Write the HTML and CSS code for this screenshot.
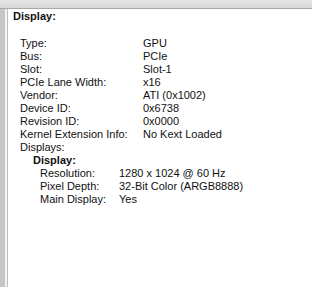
FILE: index.html
```html
<!DOCTYPE html>
<html lang="en">
<head>
  <meta charset="UTF-8" />
  <title>Display</title>
  <link rel="stylesheet" href="styles.css">
</head>
<body>
  <div class="topbar"></div>
  <div class="main">
    <div class="sidebar"></div>
    <div class="content">
      <h2 class="section-title">Display:</h2>
      <div class="props">
        <span>Type:</span><span>GPU</span>
        <span>Bus:</span><span>PCIe</span>
        <span>Slot:</span><span>Slot-1</span>
        <span>PCIe Lane Width:</span><span>x16</span>
        <span>Vendor:</span><span>ATI (0x1002)</span>
        <span>Device ID:</span><span>0x6738</span>
        <span>Revision ID:</span><span>0x0000</span>
        <span>Kernel Extension Info:</span><span>No Kext Loaded</span>
        <span>Displays:</span><span></span>
      </div>
      <div class="sub">
        <h3 class="sub-title">Display:</h3>
        <div class="props sub-props">
          <span>Resolution:</span><span>1280 x 1024 @ 60 Hz</span>
          <span>Pixel Depth:</span><span>32-Bit Color (ARGB8888)</span>
          <span>Main Display:</span><span>Yes</span>
        </div>
      </div>
    </div>
  </div>
</body>
</html>
```

FILE: styles.css
```css
html, body {
  height: 100%;
}

body {
  margin: 0;
  font-family: 'Liberation Sans', Arial, sans-serif;
  font-size: 11px;
  color: #111;
  background: #fff;
  display: flex;
  flex-direction: column;
  overflow: hidden;
}

.topbar {
  height: 8px;
  background: linear-gradient(#e6e6e6, #d6d6d6);
  border-bottom: 1px solid #a8a8a8;
}

.main {
  flex: 1;
  display: flex;
}

.sidebar {
  width: 5px;
  background: #c6c6c6;
  border-right: 2px solid #f4f4f4;
  box-shadow: 1px 0 0 #bdbdbd;
}

.content {
  flex: 1;
  padding: 1px 0 0 6px;
  line-height: 13px;
}

.section-title {
  margin: 0 0 14px;
  font-size: 11px;
  font-weight: bold;
}

.props {
  display: grid;
  grid-template-columns: 123px auto;
  padding-left: 7px;
}

.sub {
  padding-left: 20px;
}

.sub-title {
  margin: 0;
  font-size: 11px;
  font-weight: bold;
}

.sub-props {
  grid-template-columns: 79px auto;
}
```
